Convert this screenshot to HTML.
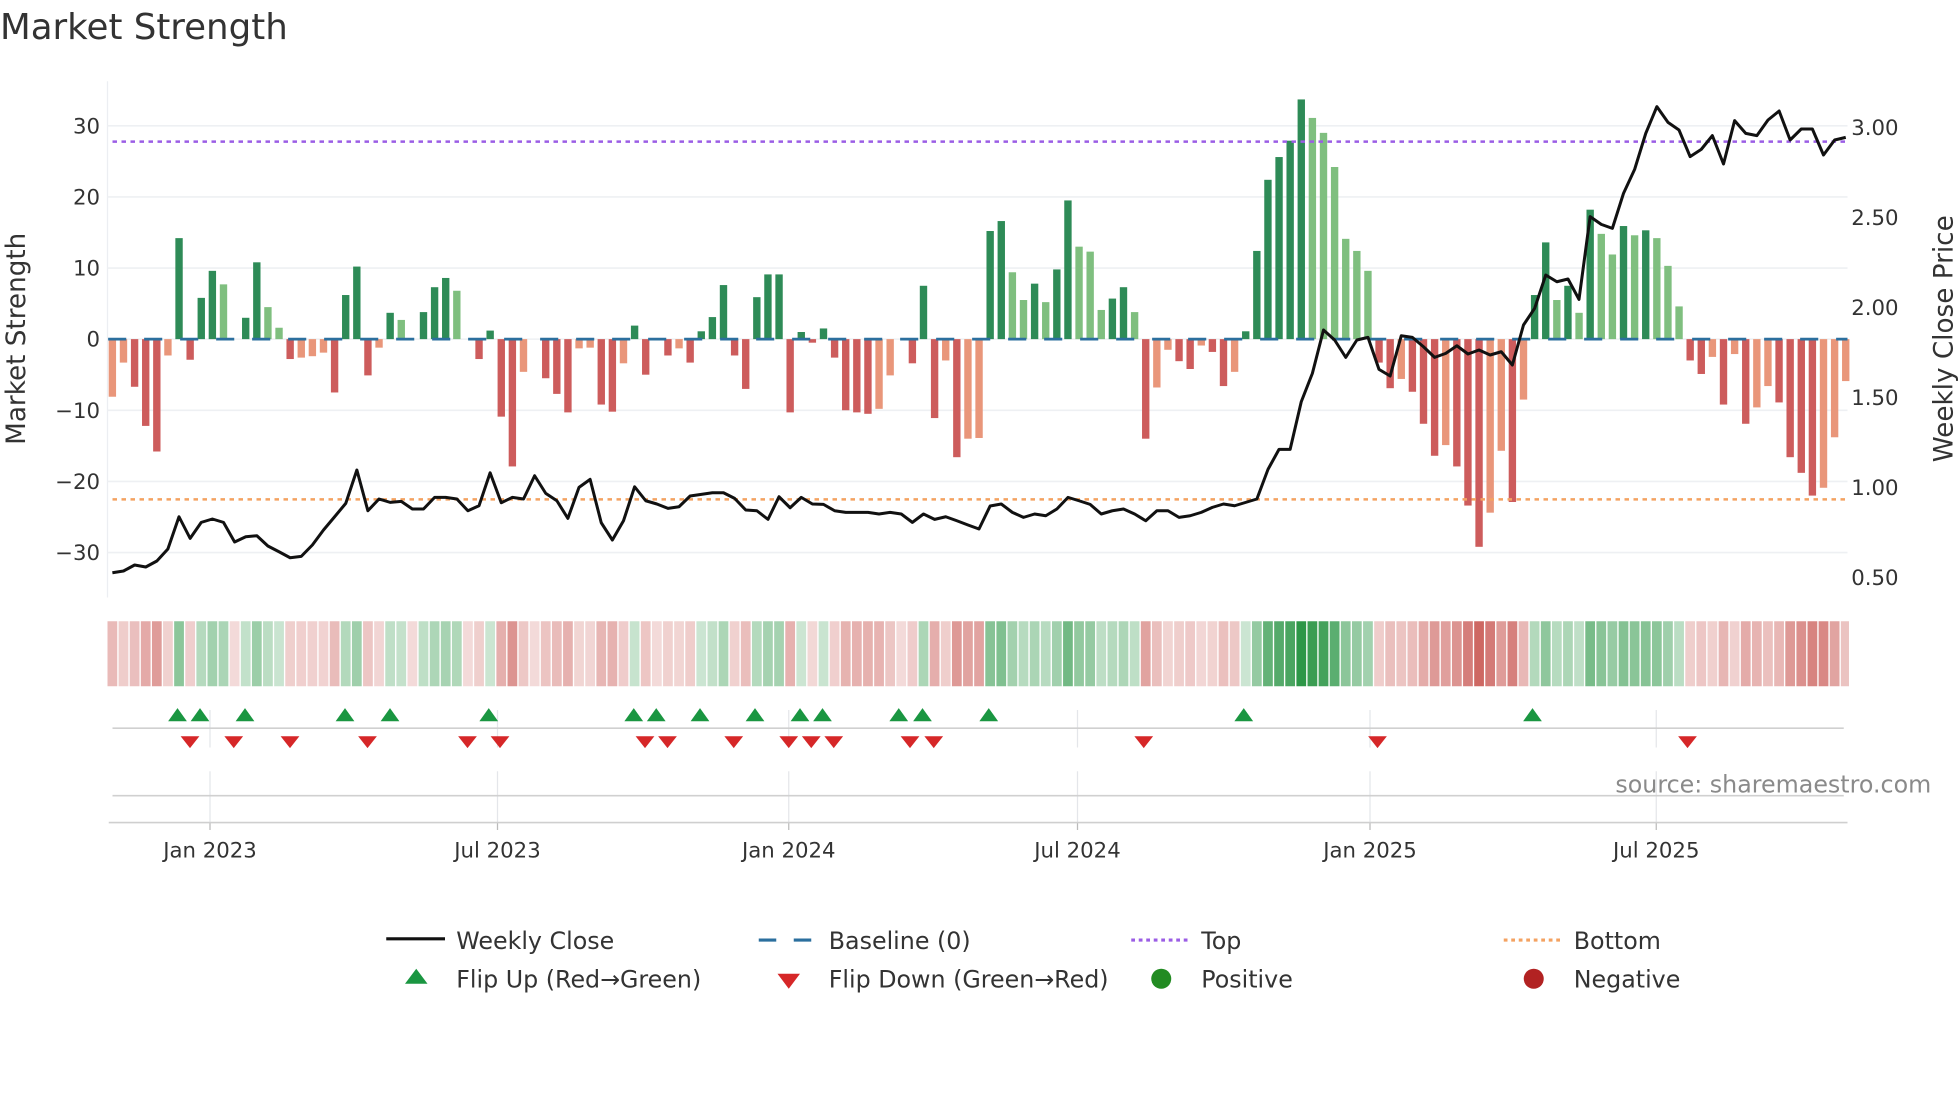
<!DOCTYPE html>
<html><head><meta charset="utf-8"><style>
html,body{margin:0;padding:0;background:#fff;}
svg{display:block;font-family:"DejaVu Sans","Liberation Sans",sans-serif;}
</style></head><body>
<svg id="s" width="1960" height="1102" viewBox="0 0 1568 881.6" xmlns="http://www.w3.org/2000/svg">
<rect width="1568" height="882" fill="#fff"/>
<text x="0" y="31" font-size="28.5" fill="#333">Market Strength</text>
<g id="grid"></g>
<g id="bars"></g>
<g id="heat"></g>
<g id="marks"></g>
<text transform="translate(20,271) rotate(-90)" text-anchor="middle" font-size="21" fill="#333">Market Strength</text>
<text transform="translate(1562,271) rotate(-90)" text-anchor="middle" font-size="21" fill="#333">Weekly Close Price</text>
<text x="1545" y="634" text-anchor="end" font-size="19" fill="#8a8a8a">source: sharemaestro.com</text>
<g font-size="19" fill="#333">
<line x1="309" y1="751" x2="356" y2="751" stroke="#111" stroke-width="2.5"/>
<text x="365" y="759">Weekly Close</text>
<line x1="607" y1="752" x2="621" y2="752" stroke="#2b6f9e" stroke-width="2.5"/>
<line x1="635" y1="752" x2="649" y2="752" stroke="#2b6f9e" stroke-width="2.5"/>
<text x="663" y="759">Baseline (0)</text>
<line x1="905" y1="752" x2="950" y2="752" stroke="#9b5de5" stroke-width="2.5" stroke-dasharray="3,3"/>
<text x="961" y="759">Top</text>
<line x1="1203" y1="752" x2="1248" y2="752" stroke="#f4a261" stroke-width="2.5" stroke-dasharray="3,3"/>
<text x="1259" y="759">Bottom</text>
<polygon points="333,775 342,787 324,787" fill="#1a9641"/>
<text x="365" y="790">Flip Up (Red→Green)</text>
<polygon points="622,779 640,779 631,791" fill="#d62728"/>
<text x="663" y="790">Flip Down (Green→Red)</text>
<circle cx="929" cy="783" r="8" fill="#228b22"/>
<text x="961" y="790">Positive</text>
<circle cx="1227" cy="783" r="8" fill="#b22222"/>
<text x="1259" y="790">Negative</text>
</g>
</svg>
<script>
var V=[-8.1,-3.3,-6.7,-12.2,-15.8,-2.3,14.2,-2.9,5.8,9.6,7.7,0,3.0,10.8,4.5,1.6,-2.8,-2.6,-2.4,-1.9,-7.5,6.2,10.2,-5.1,-1.2,3.7,2.7,0,3.8,7.3,8.6,6.8,0,-2.8,1.2,-10.9,-17.9,-4.6,0,-5.5,-7.7,-10.3,-1.3,-1.2,-9.2,-10.2,-3.4,1.9,-5.0,0,-2.3,-1.3,-3.3,1.1,3.1,7.6,-2.3,-7.0,5.9,9.1,9.1,-10.3,1.0,-0.5,1.5,-2.6,-10,-10.3,-10.5,-9.8,-5.1,0,-3.4,7.5,-11.1,-3.0,-16.6,-14.0,-13.9,15.2,16.6,9.4,5.5,7.8,5.2,9.8,19.5,13.0,12.3,4.1,5.7,7.3,3.8,-14.0,-6.8,-1.5,-3.1,-4.2,-0.9,-1.8,-6.6,-4.6,1.1,12.4,22.4,25.6,27.9,33.7,31.1,29.0,24.2,14.1,12.4,9.6,-3.3,-6.9,-5.6,-7.4,-11.9,-16.4,-14.9,-17.9,-23.4,-29.2,-24.4,-15.7,-22.9,-8.5,6.2,13.6,5.5,7.5,3.7,18.2,14.8,11.9,15.9,14.6,15.3,14.2,10.3,4.6,-3.0,-4.9,-2.5,-9.2,-2.1,-11.9,-9.6,-6.6,-8.9,-16.6,-18.8,-22.0,-20.9,-13.8,-5.9];
var L=[1478,1473,1455,1461,1443,1407,1310,1375,1327,1317,1327,1386,1370,1367,1398,1415,1433,1429,1395,1350,1310,1270,1170,1292,1257,1267,1264,1287,1287,1252,1252,1257,1292,1277,1178,1268,1252,1257,1187,1240,1262,1315,1222,1198,1328,1380,1322,1220,1262,1272,1285,1280,1248,1243,1238,1238,1255,1290,1292,1318,1250,1283,1252,1272,1273,1292,1297,1297,1297,1302,1297,1302,1327,1302,1318,1310,1322,1335,1347,1278,1272,1297,1312,1302,1307,1287,1252,1262,1273,1302,1292,1287,1302,1322,1292,1292,1312,1307,1297,1282,1272,1277,1267,1257,1168,1108,1108,965,880,750,780,832,780,772,868,888,767,772,800,832,820,797,822,810,825,815,855,735,685,585,605,597,658,410,433,445,340,268,160,80,127,150,230,208,167,252,122,160,167,120,93,180,147,147,225,180,172];
var NS="http://www.w3.org/2000/svg";
function el(p,t,a,txt){var e=document.createElementNS(NS,t);for(var k in a)e.setAttribute(k,a[k]);if(txt!=null)e.textContent=txt;document.getElementById(p).appendChild(e);return e;}
function X(i){return 89.9+8.889*i;}
function Y(v){return 271.3-5.69*v;}
el('grid','line',{x1:86,y1:65,x2:86,y2:478,stroke:'#eceef2','stroke-width':1});
[30,20,10,0,-10,-20,-30].forEach(function(v){var y=Y(v);
 el('grid','line',{x1:86,y1:y,x2:1478,y2:y,stroke:'#eef0f3','stroke-width':1.3});
 el('grid','text',{x:80,y:y+6,'text-anchor':'end','font-size':17,fill:'#333'},(v<0?'\u2212'+(-v):''+v));});
['3.00','2.50','2.00','1.50','1.00','0.50'].forEach(function(t,k){el('grid','text',{x:1481,y:108+72*k,'font-size':17,fill:'#333'},t);});
for(var i=0;i<V.length;i++){var v=V[i],p=i?V[i-1]:v,c;
 if(v>0)c=(v>=p?'#2e8b57':'#7fbf7f');else c=(v<p?'#cd5c5c':'#e9967a');
 if(v==0)continue;var y0=Y(0),y1=Y(v);
 el('bars','rect',{x:X(i)-2.95,y:Math.min(y0,y1),width:5.9,height:Math.abs(y1-y0),fill:c});}
el('bars','line',{x1:86.5,y1:Y(0),x2:1478,y2:Y(0),stroke:'#2b6f9e','stroke-width':2.3,'stroke-dasharray':'14.5,14.3'});
el('bars','line',{x1:90,y1:113.3,x2:1478,y2:113.3,stroke:'#9b5de5','stroke-width':2,'stroke-dasharray':'3.6,3.6'});
el('bars','line',{x1:90,y1:399.5,x2:1478,y2:399.5,stroke:'#f4a261','stroke-width':2,'stroke-dasharray':'3.6,3.6'});
var pts=L.map(function(z,i){return X(i).toFixed(1)+','+(64+z*0.2667).toFixed(1);}).join(' ');
el('bars','polyline',{points:pts,fill:'none',stroke:'#111','stroke-width':2.4,'stroke-linejoin':'round'});
function mix(a,b,t){return 'rgb('+a.map(function(x,k){return Math.round(255+(x-255)*t);}).join(',')+')';}
for(var i=0;i<V.length;i++){var v=V[i],t=0.22+0.78*Math.min(Math.abs(v)/34,1);
 var c=v>0?mix([44,150,70],0,t):mix([200,85,80],0,t);
 var w=(i==V.length-1)?6.5:7.8;
 el('heat','rect',{x:X(i)-3.9,y:497,width:w,height:52,fill:c});}
[168,398,631,862,1096,1325].forEach(function(x){
 el('marks','line',{x1:x,y1:568,x2:x,y2:598,stroke:'#e4e6ea','stroke-width':1});
 el('marks','line',{x1:x,y1:617,x2:x,y2:658,stroke:'#e4e6ea','stroke-width':1});
 el('marks','line',{x1:x,y1:658,x2:x,y2:664,stroke:'#bbb','stroke-width':1});});
el('marks','line',{x1:90,y1:582.5,x2:1475,y2:582.5,stroke:'#d0d0d0','stroke-width':1.3});
el('marks','line',{x1:90,y1:636.5,x2:1475,y2:636.5,stroke:'#d0d0d0','stroke-width':1.3});
el('marks','line',{x1:87,y1:658,x2:1478,y2:658,stroke:'#cfcfcf','stroke-width':1.3});
[['Jan 2023',168],['Jul 2023',398],['Jan 2024',631],['Jul 2024',862],['Jan 2025',1096],['Jul 2025',1325]].forEach(function(a){
 el('marks','text',{x:a[1],y:686,'text-anchor':'middle','font-size':17,fill:'#333'},a[0]);});
[142,160,196,276,312,391,507,525,560,604,640,658,719,738,791,995,1226].forEach(function(x){
 el('marks','polygon',{points:(x)+',566.5 '+(x+7.5)+',577 '+(x-7.5)+',577',fill:'#1a9641'});});
[152,187,232,294,374,400,516,534,587,631,649,667,728,747,915,1102,1350].forEach(function(x){
 el('marks','polygon',{points:(x-7.5)+',589 '+(x+7.5)+',589 '+x+',598.5',fill:'#d62728'});});
</script>
</body></html>
